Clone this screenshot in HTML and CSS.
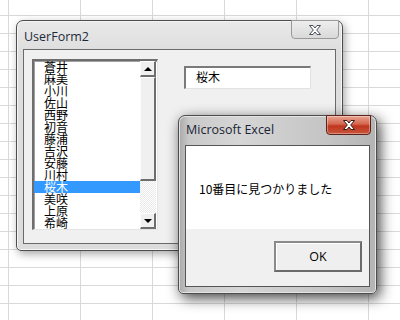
FILE: index.html
```html
<!DOCTYPE html>
<html lang="ja">
<head>
<meta charset="utf-8">
<link rel="stylesheet" href="styles.css">
</head>
<body>
<div class="sheet">
  <div class="win userform">
    <div class="titlebar">
      <span class="title">UserForm2</span>
      <span class="close close-gray">
        <svg width="16" height="12" viewBox="0 0 16 12"><path d="M2.5 1.5h3.5l2 2.5 2-2.5h3.5l-3.8 4.5 3.8 4.5h-3.5l-2-2.5-2 2.5h-3.5l3.8-4.5z" fill="#fff" stroke="#4a4f5a" stroke-width="1" stroke-linejoin="round"/></svg>
      </span>
    </div>
    <div class="client form-client">
      <div class="listbox">
        <ul class="items">
          <li>蒼井</li><li>麻美</li><li>小川</li><li>佐山</li><li>西野</li><li>初音</li><li>藤浦</li><li>吉沢</li><li>安藤</li><li>川村</li><li class="sel">桜木</li><li>美咲</li><li>上原</li><li>希崎</li>
        </ul>
        <div class="scrollbar">
          <div class="sbtn"><span class="tri up"></span></div>
          <div class="thumb"></div>
          <div class="track"></div>
          <div class="sbtn"><span class="tri down"></span></div>
        </div>
      </div>
      <div class="textbox">桜木</div>
    </div>
  </div>

  <div class="win msgbox">
    <div class="titlebar">
      <span class="title">Microsoft Excel</span>
      <span class="close close-red">
        <svg width="16" height="12" viewBox="0 0 16 12"><path d="M2.5 1.5h3.5l2 2.5 2-2.5h3.5l-3.8 4.5 3.8 4.5h-3.5l-2-2.5-2 2.5h-3.5l3.8-4.5z" fill="#fff" stroke="#3b1a14" stroke-width="1" stroke-linejoin="round"/></svg>
      </span>
    </div>
    <div class="client msg-client">
      <div class="msg-body">10番目に見つかりました</div>
      <div class="msg-foot"><button class="okbtn">OK</button></div>
    </div>
  </div>
</div>
</body>
</html>
```
FILE: styles.css
```css
html, body {
  margin: 0;
  padding: 0;
}
body {
  width: 400px;
  height: 320px;
  overflow: hidden;
  background-color: #fff;
  background-image:
    linear-gradient(to right, #d9d9d9 1px, transparent 1px),
    linear-gradient(to bottom, #d9d9d9 1px, transparent 1px);
  background-size: 72px 18px;
  background-position: 8px 15px;
  font-family: "Open Sans", "Noto Sans", sans-serif;
}
.sheet {
  position: relative;
  width: 400px;
  height: 320px;
}
.win {
  position: absolute;
  box-sizing: border-box;
  border: 1px solid #4d4d4d;
  border-radius: 7px 7px 5px 5px;
  display: flex;
  flex-direction: column;
  padding: 0 6px 6px 6px;
}
.userform {
  left: 16px;
  top: 20px;
  width: 327px;
  height: 231px;
  background: linear-gradient(to bottom, #e9e9e9 0, #dedede 30px, #dcdcdc 100%);
  box-shadow: 2px 3px 8px rgba(0,0,0,0.35), inset 0 0 0 1px #f6f6f6;
}
.msgbox {
  left: 178px;
  top: 115px;
  width: 199px;
  height: 179px;
  background: linear-gradient(to right, #a9a9a9 0, #c9c9c9 10px, #d6d6d6 60px, #c4c4c4 150px, #b4b4b4 100%);
  box-shadow: 3px 4px 14px rgba(0,0,0,0.75), inset 0 0 0 1px #e4e4e4;
  padding: 0 6px 6px 6px;
}
.titlebar {
  height: 28px;
  flex: none;
  position: relative;
  display: flex;
  align-items: flex-start;
}
.title {
  font-size: 12.5px;
  color: #1e2a3a;
  margin-top: 7px;
  margin-left: 1px;
}
.msgbox .titlebar {
  height: 29px;
}
.msgbox .title {
  margin-top: 5px;
  margin-left: 1px;
  color: #1a2436;
}
.close {
  position: absolute;
  top: -1px;
  display: flex;
  align-items: center;
  justify-content: center;
  box-sizing: border-box;
  border-radius: 0 0 4px 4px;
}
.close-gray {
  right: -3px;
  width: 48px;
  height: 19px;
  border: 1px solid #9a9a9a;
  background: linear-gradient(to bottom, #eeeeee, #d9d9d9);
}
.close-red {
  right: -1px;
  width: 45px;
  height: 20px;
  border: 1px solid #5b2219;
  background: linear-gradient(to bottom, #e8a493 0, #d4664e 45%, #c0361e 55%, #c8563c 100%);
  box-shadow: inset 0 0 0 1px rgba(255,255,255,0.35);
}
.client {
  flex: 1;
  box-sizing: border-box;
  border: 1px solid #6a6a6a;
}
.form-client {
  background: #f0f0f0;
  position: relative;
  display: flex;
  align-items: flex-start;
  padding: 9px 0 0 8px;
  gap: 26px;
}
.listbox {
  width: 126px;
  height: 171px;
  box-sizing: border-box;
  border-top: 2px solid #6e6e6e;
  border-left: 2px solid #6e6e6e;
  border-right: 1px solid #e4e4e4;
  border-bottom: 1px solid #e4e4e4;
  background: #fff;
  display: flex;
  overflow: hidden;
  box-shadow: inset 1px 1px 0 #a0a0a0;
}
.items {
  list-style: none;
  margin: 0;
  padding: 0;
  flex: 1;
  font-family: "Noto Sans CJK JP", sans-serif;
  font-size: 12px;
  line-height: 12px;
  color: #000;
}
.items li {
  height: 12px;
  padding-left: 10px;
  white-space: nowrap;
}
.items li.sel {
  background: #3399ff;
  color: #fff;
}
.scrollbar {
  width: 16px;
  flex: none;
  display: flex;
  flex-direction: column;
  height: 168px;
  margin-right: 1px;
}
.sbtn, .thumb {
  box-sizing: border-box;
  background: #f0f0f0;
  border-top: 1px solid #fdfdfd;
  border-left: 1px solid #fdfdfd;
  border-right: 2px solid #6e6e6e;
  border-bottom: 2px solid #6e6e6e;
}
.sbtn {
  height: 16px;
  display: flex;
  align-items: center;
  justify-content: center;
}
.thumb {
  height: 104px;
}
.track {
  flex: 1;
  background-color: #f4f4f4;
  background-image: repeating-conic-gradient(#ffffff 0 25%, #e8e8e8 0 50%);
  background-size: 2px 2px;
}
.tri {
  width: 0;
  height: 0;
  border-left: 4px solid transparent;
  border-right: 4px solid transparent;
}
.tri.up {
  border-bottom: 4px solid #000;
}
.tri.down {
  border-top: 4px solid #000;
}
.textbox {
  margin-top: 7px;
  width: 127px;
  height: 23px;
  box-sizing: border-box;
  border-top: 2px solid #7a7a7a;
  border-left: 2px solid #7a7a7a;
  border-right: 1px solid #e2e2e2;
  border-bottom: 1px solid #e2e2e2;
  background: #fff;
  font-family: "Noto Sans CJK JP", sans-serif;
  font-size: 12px;
  line-height: 18px;
  padding-left: 10px;
}
.msg-client {
  display: flex;
  flex-direction: column;
  background: #f0f0f0;
  border-color: #555;
}
.msg-body {
  height: 83px;
  background: #fff;
  font-family: "Noto Sans CJK JP", sans-serif;
  font-size: 12px;
  color: #000;
  padding: 34px 0 0 13px;
  box-sizing: border-box;
}
.msg-foot {
  flex: 1;
  display: flex;
  justify-content: flex-end;
  align-items: flex-start;
  padding: 12px 7px 0 0;
}
.okbtn {
  width: 88px;
  height: 31px;
  box-sizing: border-box;
  border: 2px solid #6a6a6a;
  border-top-color: #8a8a8a;
  border-left-color: #8a8a8a;
  background: #efefef;
  box-shadow: inset 1px 1px 0 #fff;
  font-family: "Open Sans", "Noto Sans", sans-serif;
  font-size: 12.5px;
  color: #000;
  padding: 0;
}
```
